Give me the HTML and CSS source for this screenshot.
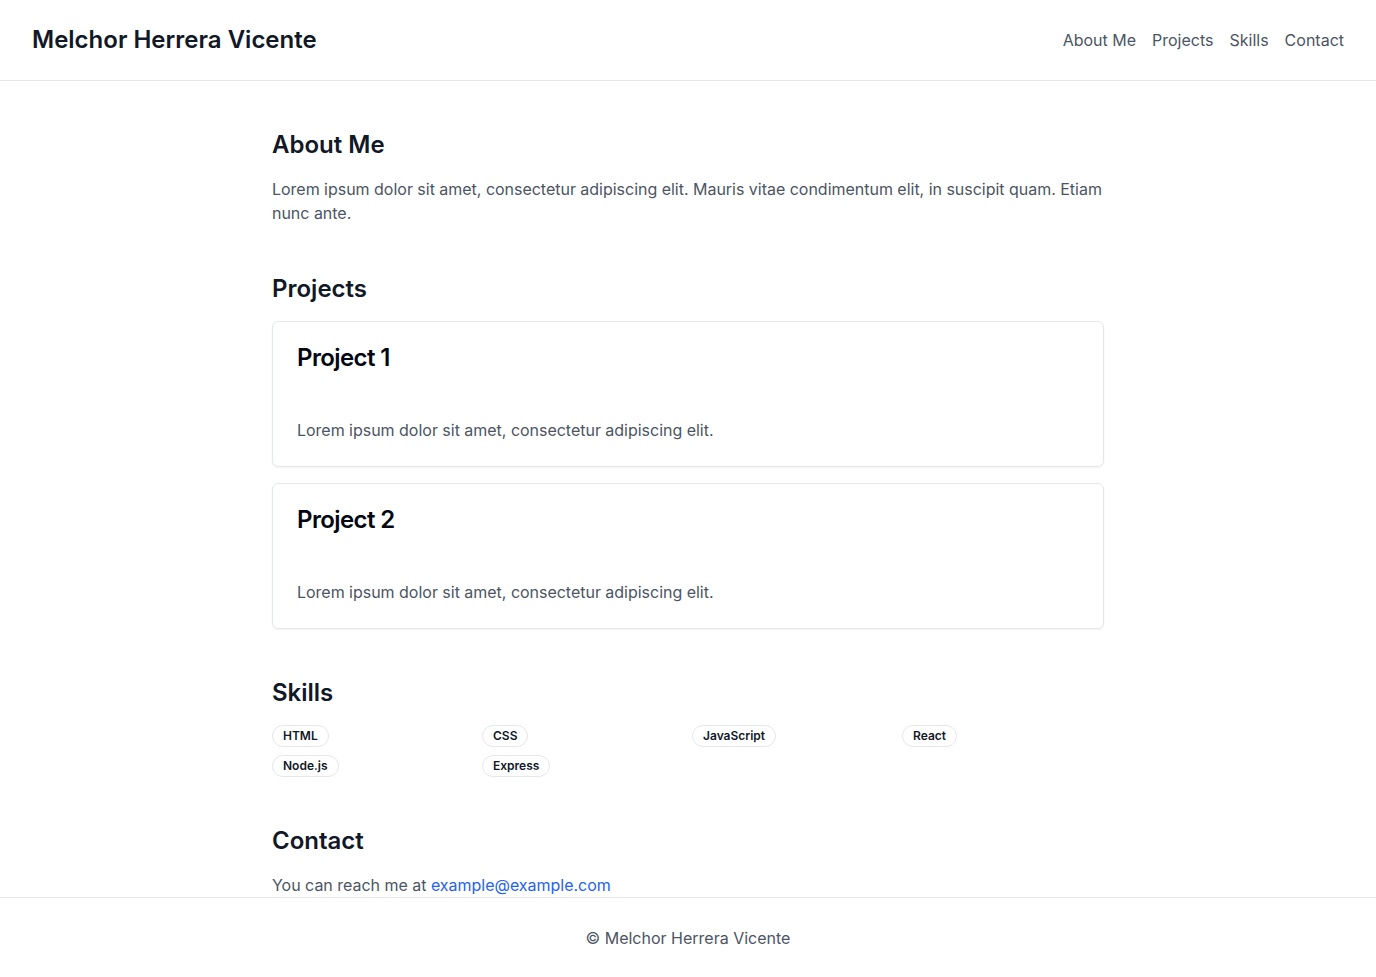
FILE: index.html
```html
<!DOCTYPE html>
<html lang="en">
<head>
<meta charset="utf-8">
<title>Melchor Herrera Vicente</title>
<link rel="stylesheet" href="styles.css">
</head>
<body>
<header class="site-header">
  <h1 class="brand">Melchor Herrera Vicente</h1>
  <nav class="nav">
    <a href="#about">About Me</a>
    <a href="#projects">Projects</a>
    <a href="#skills">Skills</a>
    <a href="#contact">Contact</a>
  </nav>
</header>
<main class="main">
  <section id="about" class="section">
    <h2 class="section-title">About Me</h2>
    <p class="text">Lorem ipsum dolor sit amet, consectetur adipiscing elit. Mauris vitae condimentum elit, in suscipit quam. Etiam nunc ante.</p>
  </section>
  <section id="projects" class="section">
    <h2 class="section-title">Projects</h2>
    <div class="cards">
      <div class="card">
        <div class="card-header"><h3 class="card-title">Project 1</h3></div>
        <div class="card-content"><p class="text">Lorem ipsum dolor sit amet, consectetur adipiscing elit.</p></div>
      </div>
      <div class="card">
        <div class="card-header"><h3 class="card-title">Project 2</h3></div>
        <div class="card-content"><p class="text">Lorem ipsum dolor sit amet, consectetur adipiscing elit.</p></div>
      </div>
    </div>
  </section>
  <section id="skills" class="section">
    <h2 class="section-title">Skills</h2>
    <div class="skills">
      <span class="badge">HTML</span>
      <span class="badge">CSS</span>
      <span class="badge">JavaScript</span>
      <span class="badge">React</span>
      <span class="badge">Node.js</span>
      <span class="badge">Express</span>
    </div>
  </section>
  <section id="contact" class="section">
    <h2 class="section-title">Contact</h2>
    <p class="text">You can reach me at <a class="link" href="mailto:example@example.com">example@example.com</a></p>
  </section>
</main>
<footer class="site-footer">© Melchor Herrera Vicente</footer>
</body>
</html>
```
FILE: styles.css
```css
* { box-sizing: border-box; }
html, body { margin: 0; padding: 0; }
body {
  font-family: Inter, "Noto Sans", "Liberation Sans", sans-serif;
  color: #111827;
  background: #fff;
}
.site-header {
  height: 81px;
  display: flex;
  align-items: center;
  justify-content: space-between;
  padding: 0 32px;
  border-bottom: 1px solid #e5e7eb;
}
.brand {
  margin: 0;
  font-size: 24px;
  line-height: 32px;
  font-weight: 600;
  color: #111827;
}
.nav { display: flex; gap: 16px; }
.nav a {
  color: #4b5563;
  text-decoration: none;
  font-size: 16px;
  line-height: 24px;
}
.main {
  max-width: 896px;
  margin: 0 auto;
  padding: 48px 32px 128px;
  display: flex;
  flex-direction: column;
  gap: 48px;
}
.section-title {
  margin: 0 0 16px;
  font-size: 24px;
  line-height: 32px;
  font-weight: 600;
  color: #111827;
}
.text {
  margin: 0;
  font-size: 16px;
  line-height: 24px;
  color: #4b5563;
  letter-spacing: -0.02px;
}
.cards { display: flex; flex-direction: column; gap: 16px; }
.card {
  border: 1px solid #e5e7eb;
  border-radius: 6px;
  background: #fff;
  box-shadow: 0 1px 2px rgba(0,0,0,0.05);
}
.card-header { padding: 24px; }
.card-title {
  margin: 0;
  font-size: 24px;
  line-height: 24px;
  font-weight: 600;
  letter-spacing: -0.6px;
  color: #030712;
}
.card-content { padding: 24px; }
.skills {
  display: grid;
  grid-template-columns: repeat(4, 1fr);
  gap: 8px;
  justify-items: start;
}
.badge {
  display: inline-flex;
  align-items: center;
  border: 1px solid #e5e7eb;
  border-radius: 9999px;
  padding: 2px 10px;
  font-size: 12px;
  line-height: 16px;
  font-weight: 600;
  color: #111827;
  background: #fff;
}
.link { color: #2563eb; text-decoration: none; }
.site-footer {
  position: fixed;
  left: 0;
  right: 0;
  bottom: 0;
  height: 80px;
  border-top: 1px solid #e5e7eb;
  background: #fff;
  display: flex;
  align-items: center;
  justify-content: center;
  font-size: 16px;
  line-height: 24px;
  color: #4b5563;
}
```
